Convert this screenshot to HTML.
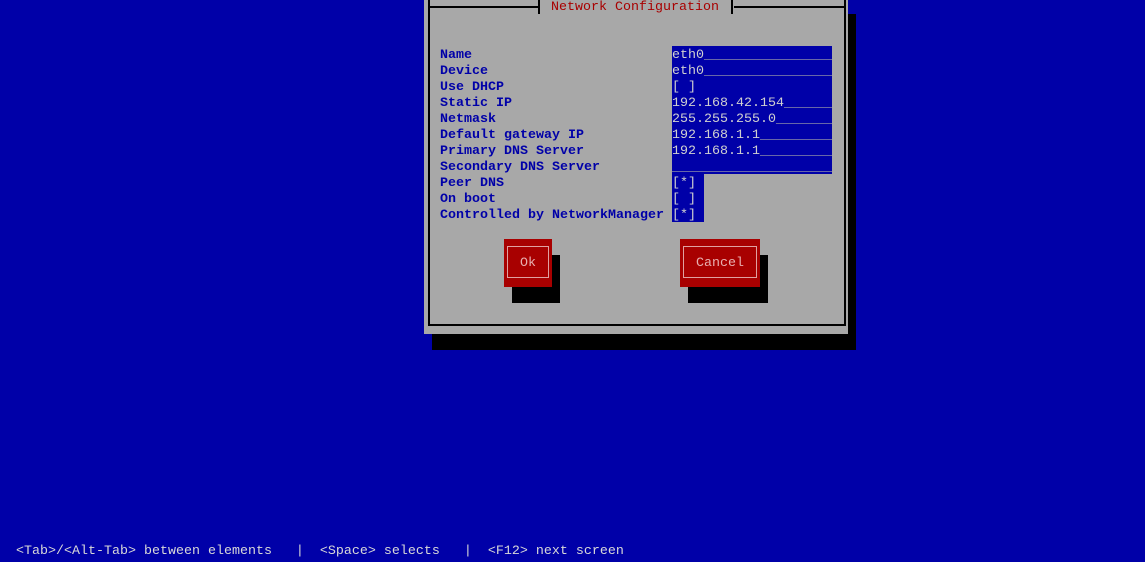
<!DOCTYPE html>
<html><head><style>
*{margin:0;padding:0}
body{width:1145px;height:559px;background:#0000a8;position:relative;overflow:hidden;font-family:"Liberation Mono",monospace;font-size:13.333px;line-height:20px}
div{position:absolute}
.t{white-space:pre;height:16px}
.lbl{color:#0000a8;font-weight:bold;left:440px}
.fld{background:#0000a8;color:#d0d0d0;left:672px;height:16px;white-space:pre;overflow:hidden}
.u{color:#a8a8a8}
</style></head><body>
<div style="left:432px;top:14px;width:424px;height:336px;background:#000"></div>
<div style="left:424px;top:0;width:424px;height:334px;background:#a8a8a8"></div>
<div style="left:428px;top:-2px;width:414px;height:326px;border:2px solid #000;border-top:none"></div>
<div style="left:428px;top:6px;width:416px;height:2px;background:#000"></div>
<div style="left:538px;top:0;width:196px;height:16px;background:#a8a8a8"></div>
<div style="left:538px;top:0;width:2px;height:14px;background:#000"></div>
<div style="left:731px;top:0;width:2px;height:14px;background:#000"></div>
<div class="t" style="left:551px;top:-2px;color:#a80000">Network Configuration</div>

<div class="t lbl" style="top:46px">Name</div>
<div class="t lbl" style="top:62px">Device</div>
<div class="t lbl" style="top:78px">Use DHCP</div>
<div class="t lbl" style="top:94px">Static IP</div>
<div class="t lbl" style="top:110px">Netmask</div>
<div class="t lbl" style="top:126px">Default gateway IP</div>
<div class="t lbl" style="top:142px">Primary DNS Server</div>
<div class="t lbl" style="top:158px">Secondary DNS Server</div>
<div class="t lbl" style="top:174px">Peer DNS</div>
<div class="t lbl" style="top:190px">On boot</div>
<div class="t lbl" style="top:206px">Controlled by NetworkManager</div>

<div class="fld" style="top:46px;width:160px">eth0<span class="u">________________</span></div>
<div class="fld" style="top:62px;width:160px">eth0<span class="u">________________</span></div>
<div class="fld" style="top:78px;width:160px">[ ]</div>
<div class="fld" style="top:94px;width:160px">192.168.42.154<span class="u">______</span></div>
<div class="fld" style="top:110px;width:160px">255.255.255.0<span class="u">_______</span></div>
<div class="fld" style="top:126px;width:160px">192.168.1.1<span class="u">_________</span></div>
<div class="fld" style="top:142px;width:160px">192.168.1.1<span class="u">_________</span></div>
<div class="fld" style="top:158px;width:160px"><span class="u">____________________</span></div>
<div class="fld" style="top:174px;width:32px">[*]</div>
<div class="fld" style="top:190px;width:32px">[ ]</div>
<div class="fld" style="top:206px;width:32px">[*]</div>

<div style="left:512px;top:255px;width:48px;height:48px;background:#000"></div>
<div style="left:504px;top:239px;width:48px;height:48px;background:#a80000"></div>
<div style="left:507px;top:246px;width:40px;height:30px;border:1px solid #e0a0a0"></div>
<div class="t" style="left:520px;top:254px;color:#e8b0b0">Ok</div>

<div style="left:688px;top:255px;width:80px;height:48px;background:#000"></div>
<div style="left:680px;top:239px;width:80px;height:48px;background:#a80000"></div>
<div style="left:683px;top:246px;width:72px;height:30px;border:1px solid #e0a0a0"></div>
<div class="t" style="left:696px;top:254px;color:#e8b0b0">Cancel</div>

<div class="t" style="left:16px;top:542px;color:#d8d8d8">&lt;Tab&gt;/&lt;Alt-Tab&gt; between elements   |  &lt;Space&gt; selects   |  &lt;F12&gt; next screen</div>
</body></html>
